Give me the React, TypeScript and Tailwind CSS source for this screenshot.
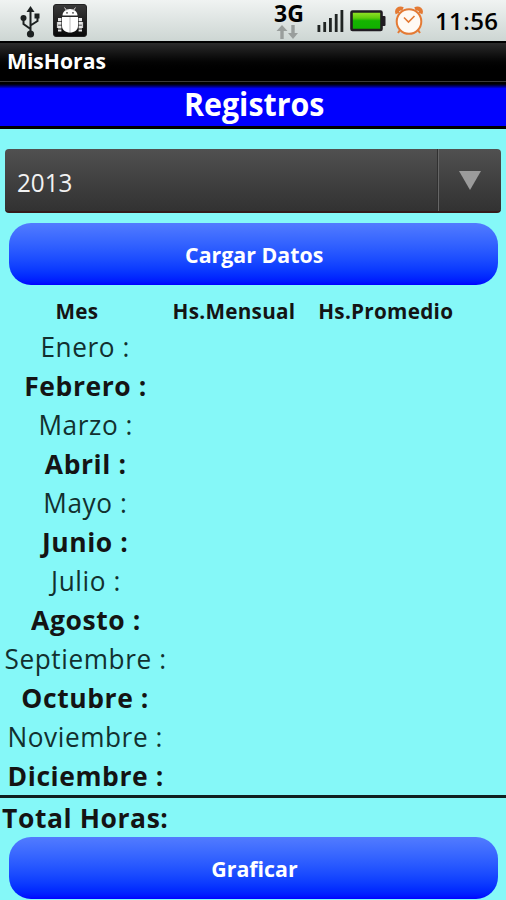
import React from 'react';

const months: string[] = [
  'Enero :',
  'Febrero :',
  'Marzo :',
  'Abril :',
  'Mayo :',
  'Junio :',
  'Julio :',
  'Agosto :',
  'Septiembre :',
  'Octubre :',
  'Noviembre :',
  'Diciembre :',
];

function UsbIcon() {
  return (
    <svg width="22" height="34" viewBox="0 0 22 34" fill="none" stroke="#1c2020" strokeWidth="2">
      <path d="M10.500 5v25M10.500 25L3.500 20v-6M10.500 21.500L17.500 17v-6" />
      <path d="M10.500 2l4 6h-8z" fill="#1c2020" stroke="none" />
      <circle cx="10.500" cy="30" r="3.600" fill="#1c2020" stroke="none" />
      <circle cx="3.500" cy="14" r="3" fill="#1c2020" stroke="none" />
      <path d="M14.500 9.500h5v5h-5z" fill="#1c2020" stroke="none" />
    </svg>
  );
}

function BugIcon() {
  return (
    <svg width="34" height="34" viewBox="0 0 34 34">
      <defs>
        <linearGradient id="tile" x1="0" y1="0" x2="0" y2="1">
          <stop offset="0" stopColor="#3a3a3a" />
          <stop offset="1" stopColor="#080808" />
        </linearGradient>
      </defs>
      <rect x="0.500" y="0.500" width="33" height="32" rx="2.500" fill="url(#tile)" stroke="#222" />
      <g fill="#fff">
        <path d="M9.500 11.500c0-3.500 3-6.500 7.500-6.500s7.500 3 7.500 6.500z" />
        <path d="M11.500 3.500l2.500 3.500M22.500 3.500l-2.500 3.500" stroke="#ddd" strokeWidth="1" />
        <path d="M9 13h16v9c0 4-3.500 6.500-8 6.500s-8-2.500-8-6.500z" />
      </g>
      <path d="M6.700 14v13.500M27.300 14v13.500" stroke="#e8e8e8" strokeWidth="3.400" strokeDasharray="3 0.800" />
      <path d="M4.500 18v6M29.500 18v6" stroke="#ccc" strokeWidth="1.200" />
      <path d="M17 13v15" stroke="#aaa" strokeWidth="0.800" />
      <circle cx="14" cy="8.800" r="0.900" fill="#444" />
      <circle cx="20" cy="8.800" r="0.900" fill="#444" />
    </svg>
  );
}

function DataArrows() {
  return (
    <svg className="block" width="24" height="15" viewBox="0 0 24 15" fill="#999e9c">
      <path d="M8 0l5.500 6h-3.800v8H6.300V6H2.500zM19 14l5-6h-3.300V0h-3.400v8H14z" />
    </svg>
  );
}

function Signal() {
  return (
    <svg width="28" height="24" viewBox="0 0 28 24" fill="#202423">
      <path d="M.5 16h2.800v7H.5zM6.300 13h2.800v10H6.300zM12 9h2.800v14H12zM17.800 5h2.800v18h-2.800zM23.500 1h2.800v22h-2.800z" />
    </svg>
  );
}

function Battery() {
  return (
    <svg width="36" height="22" viewBox="0 0 36 22">
      <defs>
        <linearGradient id="charge" x1="0" y1="0" x2="0" y2="1">
          <stop offset="0" stopColor="#9be52c" />
          <stop offset="0.350" stopColor="#5fcc0c" />
          <stop offset="0.500" stopColor="#14b400" />
          <stop offset="1" stopColor="#10b000" />
        </linearGradient>
      </defs>
      <rect x="31" y="6" width="4.500" height="10" rx="1" fill="#211c22" />
      <rect x="1.500" y="1.500" width="30" height="18.500" rx="1" fill="url(#charge)" stroke="#211c22" strokeWidth="2.600" />
    </svg>
  );
}

function AlarmClock() {
  return (
    <svg width="30" height="32" viewBox="0 0 30 32" fill="none" stroke="#e47a34" strokeWidth="2">
      <path d="M3.500 8.500C2 5 5 2.500 9 4M26.500 8.500C28 5 25 2.500 21 4" strokeWidth="4" />
      <path d="M6 25l-2 3M24 25l2 3" />
      <circle cx="15" cy="16.500" r="12.300" fill="#fffaf4" />
      <path d="M10 12.500l4.500 4.500 6-6" strokeWidth="1.600" />
    </svg>
  );
}

function GlossButton({ children }: { children: React.ReactNode }) {
  return (
    <button className="mx-[9px] flex h-[62px] w-[489px] shrink-0 items-center justify-center rounded-[22px] bg-linear-to-b from-[#527bff] to-[#0000ff] text-[22px] font-bold text-white">
      <span className="inline-block scale-x-[0.97] pl-[2px]">{children}</span>
    </button>
  );
}

export default function App() {
  return (
    <div className="flex h-[900px] w-[506px] flex-col overflow-hidden bg-[#85f8f8] font-['Open_Sans','Noto_Sans',sans-serif] text-[#141414]">
      <header className="flex h-[41px] shrink-0 items-center bg-linear-to-b from-[#f0f3f2] to-[#cdd6d3]">
        <div className="ml-[20px] flex w-[33px] items-center"><UsbIcon /></div>
        <BugIcon />
        <div className="ml-[187px] flex w-[32px] flex-col items-start">
          <span className="text-[23px] leading-[23px] font-bold text-black">3G</span>
          <DataArrows />
        </div>
        <div className="ml-[11px]"><Signal /></div>
        <div className="ml-[5px]"><Battery /></div>
        <div className="ml-[8px]"><AlarmClock /></div>
        <span className="ml-[11px] text-[24px] leading-[41px] font-semibold tracking-[0.4px] text-black">11:56</span>
      </header>
      <div className="flex h-[40px] shrink-0 items-start border-t-2 border-black bg-linear-to-b from-[#2c2c2c] to-black to-80% pl-[7px]">
        <span className="inline-block origin-left scale-x-[0.96] text-[22px] leading-[34px] font-bold text-white">MisHoras</span>
      </div>
      <div className="flex h-[48px] shrink-0 items-center justify-center border-t border-b-[3px] border-t-[#3c3c3c] border-b-black bg-linear-to-b from-black from-3% via-[#0000ff] via-15% to-[#0000ff]">
        <h1 className="inline-block scale-x-[0.92] pl-[3px] text-[33px] leading-[40px] font-bold text-white">Registros</h1>
      </div>
      <div className="mx-[5px] mt-[20px] flex h-[64px] shrink-0 items-center rounded-[4px] border-b-2 border-[#351c1c] bg-linear-to-b from-[#505050] to-[#323232]">
        <div className="flex-1 pt-[5px] pl-[12px] text-[25px] text-[#f2f2f2]">
          <span className="inline-block origin-left scale-x-[0.97] font-medium">2013</span>
        </div>
        <span className="flex h-full w-[64px] items-center justify-center border-l border-[#303030] pt-[1px] shadow-[inset_1px_0_0_#666]">
          <svg width="22" height="20" viewBox="0 0 22 20"><path d="M0 0h22L11 19z" fill="#9b9b9b" /></svg>
        </span>
      </div>
      <div className="mt-[10px] flex"><GlossButton>Cargar Datos</GlossButton></div>
      <div className="flex h-[42px] shrink-0 items-center pt-[8px] text-[22px] font-bold tracking-[0.3px]">
        <span className="w-[154px] scale-x-[0.94] text-center">Mes</span>
        <span className="w-[160px] scale-x-[0.94] text-center">Hs.Mensual</span>
        <span className="w-[141px] scale-x-[0.94] text-center">Hs.Promedio</span>
      </div>
      <div className="flex shrink-0 flex-col">
        {months.map((name, i) => (
          <div key={name} className="flex h-[39px] w-[171px] items-center justify-center pt-[1px] text-[27px] whitespace-nowrap">
            <span className={i % 2 ? 'inline-block scale-x-[0.98] font-bold tracking-[0.6px]' : 'inline-block scale-x-[0.97] font-normal tracking-[0.6px] text-[#12302f]'}>{name}</span>
          </div>
        ))}
      </div>
      <div className="h-[3px] shrink-0 bg-[#102020]" />
      <div className="flex h-[39px] shrink-0 items-center pt-[1px] pl-[2px] text-[27px]">
        <span className="inline-block origin-left scale-x-[0.98] font-bold tracking-[0.6px]">Total Horas:</span>
      </div>
      <GlossButton>Graficar</GlossButton>
    </div>
  );
}
